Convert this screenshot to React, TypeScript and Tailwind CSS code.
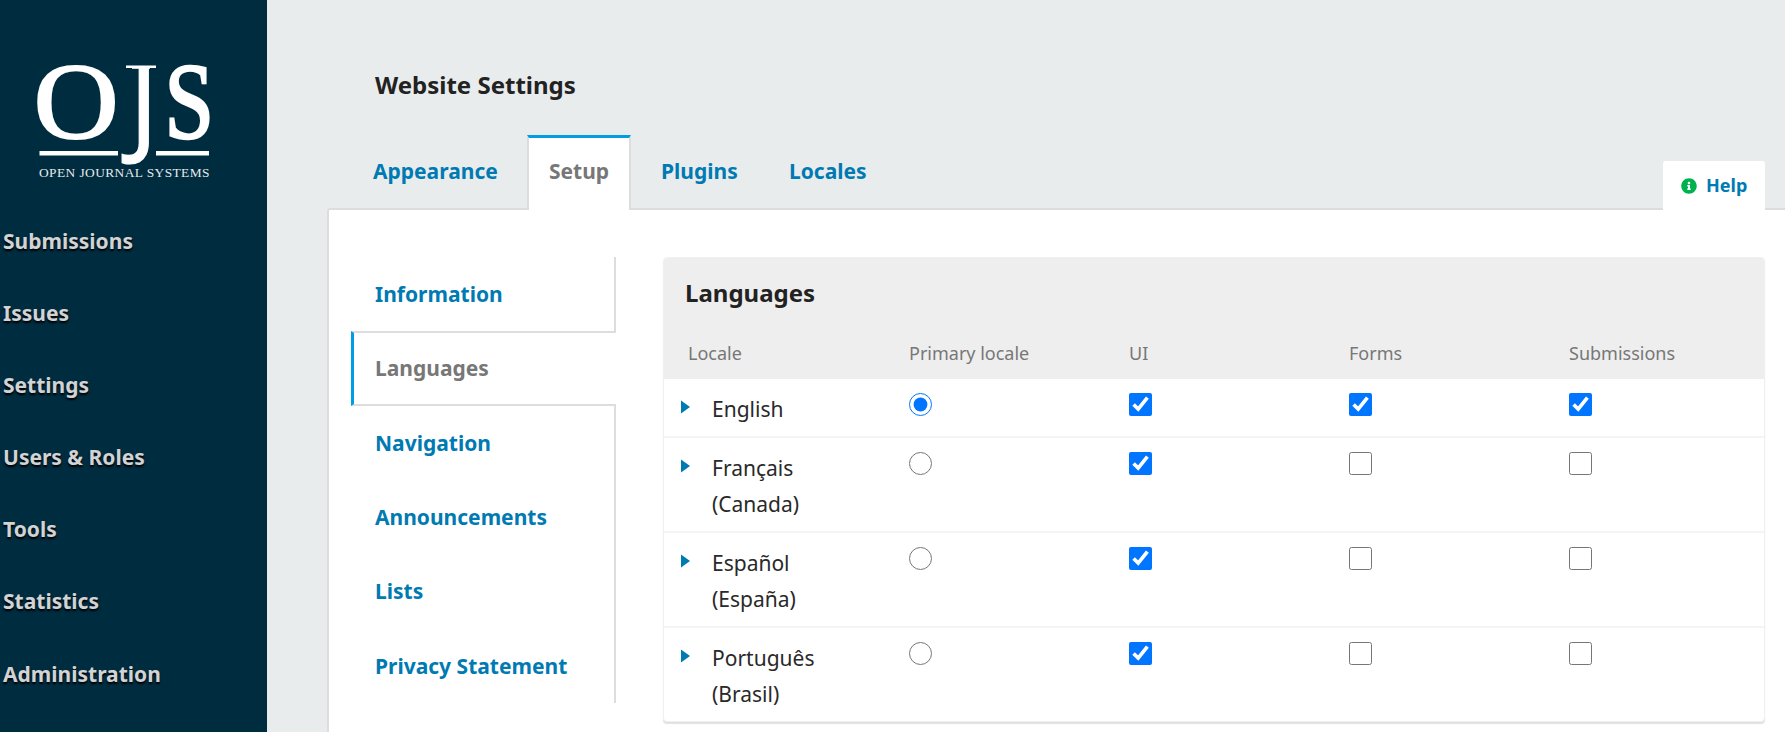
import React from "react";
import { FaInfoCircle } from "react-icons/fa";

const navItems = [
  "Submissions",
  "Issues",
  "Settings",
  "Users & Roles",
  "Tools",
  "Statistics",
  "Administration",
];

const sideTabs = [
  "Information",
  "Languages",
  "Navigation",
  "Announcements",
  "Lists",
  "Privacy Statement",
];

const columns = ["Primary locale", "UI", "Forms", "Submissions"];

const locales = [
  { name: ["English"], primary: true, checks: [true, true, true] },
  { name: ["Français", "(Canada)"], primary: false, checks: [true, false, false] },
  { name: ["Español", "(España)"], primary: false, checks: [true, false, false] },
  { name: ["Português", "(Brasil)"], primary: false, checks: [true, false, false] },
];

function Logo() {
  return (
    <svg width="180" height="124" viewBox="33 60 180 124" fill="#fff" className="block overflow-visible" aria-label="Open Journal Systems">
      <g fontFamily="Liberation Serif, serif" fontSize="100" stroke="#fff">
        <text transform="translate(33.4 138) scale(1.18 1.075)" strokeWidth="1.8">O</text>
        <text transform="translate(164.4 138) scale(0.89 1.075)" strokeWidth="2.4">S</text>
      </g>
      <text transform="translate(130 142.5) scale(0.94 1)" fontSize="107" fontFamily="Noto Sans, sans-serif" stroke="#fff" strokeWidth="1.2">J</text>
      <rect x="126" y="65.5" width="30" height="2.5" />
      <rect x="132" y="67" width="18" height="1.8" />
      <rect x="39.5" y="151" width="78.5" height="4.5" />
      <rect x="156" y="151" width="53" height="4.5" />
      <text x="39" y="177.4" fontSize="13.4" textLength="170.5" lengthAdjust="spacing" fontFamily="Liberation Serif, serif" fill="#e6eaec">
        OPEN JOURNAL SYSTEMS
      </text>
    </svg>
  );
}

function Sidebar() {
  return (
    <aside className="w-[267px] shrink-0 bg-[#002c40]">
      <div className="pt-[60px] pl-[33px]">
        <Logo />
      </div>
      <nav className="mt-[21px] flex flex-col pl-[3px]">
        {navItems.map((item) => (
          <a
            key={item}
            className="h-[72.1px] text-[21px] leading-[72px] font-bold text-[#d1d3d4] [text-shadow:0_2px_2px_#000]"
          >
            {item}
          </a>
        ))}
      </nav>
    </aside>
  );
}

function TopTabs() {
  return (
    <div className="flex h-[75px] items-stretch pl-[25px] text-[21px] leading-[72px] font-bold text-[#007ab2]">
      <a className="w-[175px] pl-[21px]">Appearance</a>
      <a className="w-[104px] border-x-2 border-t-[3px] border-x-[#ddd] border-t-[#009de5] bg-white pl-[20px] leading-[66px] text-[#777]">
        Setup
      </a>
      <a className="w-[128px] pl-[30px]">Plugins</a>
      <a className="pl-[30px]">Locales</a>
    </div>
  );
}

function SideTabs() {
  return (
    <div className="grid h-[446px] w-[265px] grid-rows-6 text-[21px] font-bold">
      {sideTabs.map((tab) =>
        tab === "Languages" ? (
          <a
            key={tab}
            className="flex items-center border-y-2 border-l-[3px] border-y-[#ddd] border-l-[#009de5] pt-[1.4px] pl-[21px] text-[#777]"
          >
            {tab}
          </a>
        ) : (
          <a key={tab} className="flex items-center border-r-2 border-[#ddd] pt-[1.4px] pl-6 text-[#007ab2]">
            {tab}
          </a>
        )
      )}
    </div>
  );
}

function LanguagesGrid() {
  return (
    <section className="w-[1102px] overflow-hidden rounded-[4px] border border-[#f0f0f0] bg-white shadow-[0_2px_1px_rgba(0,0,0,0.12)]">
      <header className="h-[121px] bg-[#eee] pt-[17px]">
        <h2 className="pl-[21px] text-[24px] leading-[36px] font-bold text-[#222]">Languages</h2>
        <div className="mt-[29px] grid grid-cols-[221px_220px_220px_220px_220px] text-[18px] leading-[27px] text-[#777]">
          <span className="pl-[24px]">Locale</span>
          {columns.map((column) => (
            <span key={column} className="pl-[24px]">
              {column}
            </span>
          ))}
        </div>
      </header>
      {locales.map((locale, index) => (
        <div
          key={locale.name[0]}
          className={
            "grid grid-cols-[221px_220px_220px_220px_220px] pt-[11px] pb-[10px] " +
            (index < locales.length - 1 ? "border-b-2 border-[#f4f4f4]" : "")
          }
        >
          <div className="flex pl-[17px]">
            <svg width="9" height="14" viewBox="0 0 9 14" className="mt-[10px] shrink-0">
              <path d="M0 0.5 9 7 0 13.5Z" fill="#007ab2" />
            </svg>
            <div className="-mb-px pt-px pl-[22px] text-[21px] leading-[36px] text-[#292929]">
              {locale.name.map((line) => (
                <div key={line}>{line}</div>
              ))}
            </div>
          </div>
          <div className="pt-[3px] pl-[24px]">
            <input type="radio" defaultChecked={locale.primary} className="m-0 block h-[23px] w-[23px]" />
          </div>
          {locale.checks.map((checked, i) => (
            <div key={i} className="pt-[3px] pl-[24px]">
              <input type="checkbox" defaultChecked={checked} className="m-0 block h-[23px] w-[23px]" />
            </div>
          ))}
        </div>
      ))}
    </section>
  );
}

export default function App() {
  return (
    <div className="flex h-[732px] w-[1785px] overflow-hidden bg-[#e9eced] font-['Noto_Sans',sans-serif]">
      <Sidebar />
      <main className="ml-[60px] flex flex-1 flex-col">
        <h1 className="pt-[67px] pl-[48px] text-[24px] leading-[36px] font-bold text-[#222]">Website Settings</h1>
        <div className="relative mt-[32px] flex items-end justify-between">
          <div className="h-[73px]">
            <TopTabs />
          </div>
          <button className="relative -mb-0.5 mr-5 flex h-[49px] w-[102px] items-center rounded-t-[3px] bg-white pl-[18px] text-[18px] font-bold text-[#007ab2]">
            <FaInfoCircle className="text-[16px] text-[#00b24e]" />
            <span className="pl-[9px]">Help</span>
          </button>
        </div>
        <div className="flex flex-1 items-start rounded-tl-[3px] border-t-2 border-l-2 border-[#ddd] bg-white pt-[47px] pl-[22px]">
          <SideTabs />
          <div className="pl-[47px]">
            <LanguagesGrid />
          </div>
        </div>
      </main>
    </div>
  );
}
